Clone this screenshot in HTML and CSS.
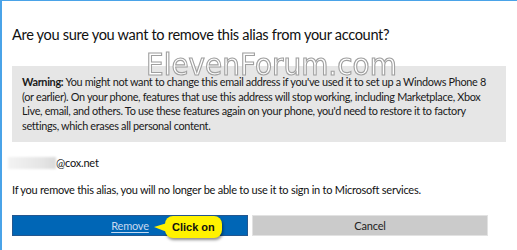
FILE: index.html
```html
<!DOCTYPE html>
<html>
<head>
<meta charset="utf-8">
<link rel="stylesheet" href="styles.css">
</head>
<body>
<div class="dialog">
  <h1 class="title">Are you sure you want to remove this alias from your account?</h1>
  <div class="warning">
    <b>Warning:</b> You might not want to change this email address if you've used it to set up a Windows Phone 8 (or earlier). On your phone, features that use this address will stop working, including Marketplace, Xbox Live, email, and others. To use these features again on your phone, you'd need to restore it to factory settings, which erases all personal content.
  </div>
  <div class="email"><span class="blur"></span>@cox.net</div>
  <p class="note">If you remove this alias, you will no longer be able to use it to sign in to Microsoft services.</p>
  <div class="buttons">
    <button class="btn btn-primary"><span class="link">Remove</span></button>
    <button class="btn btn-secondary">Cancel</button>
    <div class="callout">Click on</div>
  </div>
  <div class="watermark">ElevenForum.com</div>
</div>
</body>
</html>
```
FILE: styles.css
```css
html, body {
  margin: 0;
  padding: 0;
  background: #fff;
}
.dialog {
  position: relative;
  box-sizing: border-box;
  width: 517px;
  height: 250px;
  border-top: 1px solid #4aa3e8;
  border-left: 2px solid #4aa3e8;
  padding: 0 0 0 10px;
  font-family: Lato, "Open Sans", sans-serif;
  color: #111;
}
.title {
  margin: 0;
  padding-top: 24px;
  font-size: 14.6px;
  font-weight: 400;
  line-height: 20px;
  letter-spacing: -0.33px;
  color: #111;
}
.warning {
  margin-top: 21px;
  width: 494px;
  box-sizing: border-box;
  background: #e6e6e6;
  padding: 9px 6px 9px 10px;
  font-size: 10.9px;
  line-height: 14.6px;
  letter-spacing: -0.33px;
  color: #1a1a1a;
}
.warning b {
  font-weight: 700;
}
.email {
  margin: 13px 0 0 -4px;
  font-size: 11px;
  line-height: 16px;
  letter-spacing: -0.2px;
  display: flex;
  align-items: center;
}
.blur {
  display: inline-block;
  width: 48px;
  height: 12px;
  background: linear-gradient(90deg, #f3f3f3, #e5e5e5 70%, #dadada);
  filter: blur(1px);
}
.note {
  margin: 11px 0 0 0;
  font-size: 11px;
  line-height: 16px;
  letter-spacing: -0.25px;
}
.buttons {
  position: relative;
  margin-top: 17px;
  display: flex;
  gap: 4px;
}
.btn {
  width: 236px;
  height: 21px;
  box-sizing: border-box;
  font-family: Lato, "Open Sans", sans-serif;
  font-size: 11px;
  letter-spacing: -0.2px;
  line-height: 17px;
  padding: 0;
  margin: 0;
}
.btn-primary {
  background: #0066b6;
  border: 1px solid #24578f;
  color: #c7d9f0;
}
.btn-primary .link {
  text-decoration: underline;
  text-underline-offset: 2px;
}
.btn-secondary {
  background: #cbcbcb;
  border: 1px solid #e2e2e2;
  color: #222;
}
.callout {
  position: absolute;
  left: 153px;
  top: 1px;
  height: 22px;
  padding: 0 7px;
  background: #fff200;
  border-radius: 8px;
  box-shadow: 1px 2px 3px rgba(0, 0, 0, 0.45);
  font-family: "Liberation Sans", Arial, sans-serif;
  font-weight: 700;
  font-size: 11px;
  line-height: 22px;
  color: #111;
}
.callout::before {
  content: "";
  position: absolute;
  left: -11px;
  top: 7px;
  border-top: 4px solid transparent;
  border-bottom: 5px solid transparent;
  border-right: 13px solid #fff200;
}
.watermark {
  position: absolute;
  left: 144px;
  top: 45px;
  font-family: "DejaVu Sans", sans-serif;
  font-size: 31px;
  line-height: 36px;
  letter-spacing: 0;
  color: #fff;
  -webkit-text-stroke: 1.2px #a0a0a0;
  transform: scaleX(0.9);
  transform-origin: left;
}
```
